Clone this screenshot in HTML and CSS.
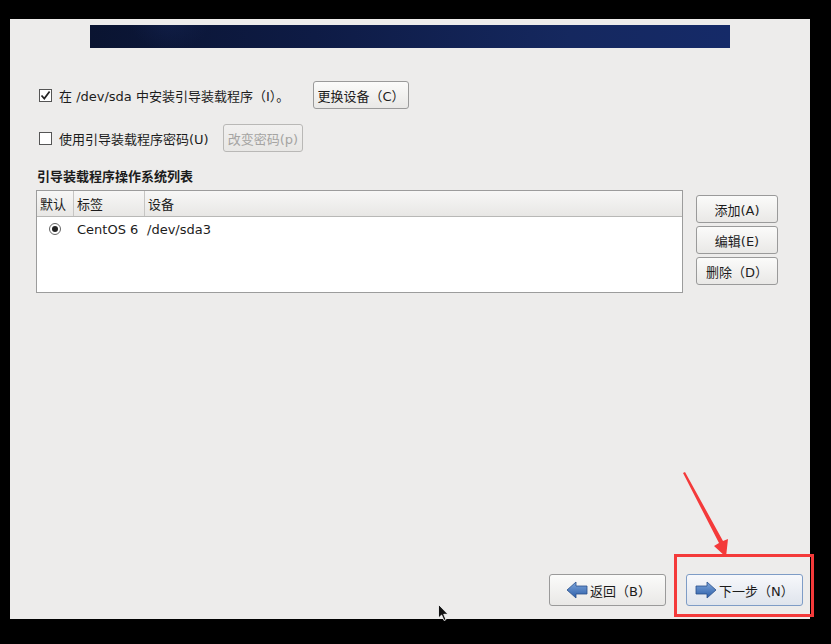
FILE: index.html
```html
<!DOCTYPE html>
<html>
<head>
<meta charset="utf-8">
<link rel="stylesheet" href="styles.css">
</head>
<body>
<div class="window">
  <div class="banner"></div>

  <div class="row row1">
    <span class="check checked">
      <svg width="11" height="11" viewBox="0 0 11 11"><path d="M1.5 5.5 L4.3 8.6 L9.6 1.6" fill="none" stroke="#222" stroke-width="1.7"/></svg>
    </span>
    <span class="label label1">在 /dev/sda 中安装引导装载程序（I）。</span>
    <button class="btn btn-change">更换设备（C）</button>
  </div>

  <div class="row row2">
    <span class="check"></span>
    <span class="label label2">使用引导装载程序密码(U)</span>
    <button class="btn btn-pass" disabled>改变密码(p)</button>
  </div>

  <div class="heading">引导装载程序操作系统列表</div>

  <div class="list-area">
    <div class="table">
      <div class="thead">
        <div class="th c1">默认</div>
        <div class="th c2">标签</div>
        <div class="th c3">设备</div>
      </div>
      <div class="trow">
        <div class="td c1"><span class="radio"><span class="dot"></span></span></div>
        <div class="td c2">CentOS 6</div>
        <div class="td c3">/dev/sda3</div>
      </div>
    </div>
    <div class="side">
      <button class="btn side-btn b-add">添加(A)</button>
      <button class="btn side-btn b-edit">编辑(E)</button>
      <button class="btn side-btn b-del">删除（D）</button>
    </div>
  </div>

  <div class="spacer"></div>

  <div class="footer">
    <button class="btn nav back">
      <svg width="22" height="18" viewBox="0 0 22 18">
        <defs><linearGradient id="ga" x1="0" y1="0" x2="0" y2="1"><stop offset="0" stop-color="#7ea6db"/><stop offset="1" stop-color="#2c5ea8"/></linearGradient></defs>
        <path d="M1 9 L10 1 L10 5 L21 5 L21 13 L10 13 L10 17 Z" fill="url(#ga)" stroke="#2a4f8a" stroke-width="0.8"/>
      </svg>
      <span>返回（B）</span>
    </button>
    <button class="btn nav next">
      <svg width="22" height="18" viewBox="0 0 22 18">
        <defs><linearGradient id="gb" x1="0" y1="0" x2="0" y2="1"><stop offset="0" stop-color="#7ea6db"/><stop offset="1" stop-color="#2c5ea8"/></linearGradient></defs>
        <path d="M21 9 L12 1 L12 5 L1 5 L1 13 L12 13 L12 17 Z" fill="url(#gb)" stroke="#2a4f8a" stroke-width="0.8"/>
      </svg>
      <span>下一步（N）</span>
    </button>
  </div>

  <div class="annot-box"></div>
  <svg class="annot-arrow" width="60" height="90" viewBox="0 0 60 90">
    <path d="M2 2 L38 72 L33 75 L45 86 L47 68 L42 70 L4 1 Z" fill="#f43a3a"/>
  </svg>
  <svg class="cursor" width="12" height="18" viewBox="0 0 12 18">
    <path d="M0.5 0.5 L0.5 14 L3.6 11 L6 16.5 L8 15.6 L5.7 10.3 L10 10.3 Z" fill="#111" stroke="#fff" stroke-width="0.8"/>
  </svg>
</div>
</body>
</html>
```

FILE: styles.css
```css
html, body {
  margin: 0;
  padding: 0;
  background: #000;
}
body {
  width: 831px;
  height: 644px;
  overflow: hidden;
  font-family: "DejaVu Sans", "Noto Sans CJK SC", sans-serif;
  font-size: 13px;
  color: #1c1c1c;
}
.window {
  position: relative;
  margin: 19px 0 0 10px;
  width: 800px;
  height: 600px;
  background: #edeceb;
  display: flex;
  flex-direction: column;
  box-sizing: border-box;
  padding-left: 26px;
}
.banner {
  margin-left: 54px;
  margin-top: 6px;
  width: 640px;
  height: 23px;
  background:
    radial-gradient(ellipse 40px 30px at 80px -4px, rgba(20,35,80,0.55), rgba(20,35,80,0) 100%),
    linear-gradient(90deg, #0a1431 0%, #0e1b45 35%, #15285f 75%, #152a68 100%);
}
.row {
  display: flex;
  align-items: center;
}
.row1 {
  margin-top: 33px;
  height: 28px;
}
.row2 {
  margin-top: 15px;
  height: 28px;
}
.check {
  width: 11px;
  height: 11px;
  border: 1px solid #555;
  background: #fff;
  margin-left: 3px;
  display: flex;
  align-items: center;
  justify-content: center;
}
.label {
  margin-left: 7px;
  white-space: nowrap;
}
.btn {
  font-family: "DejaVu Sans", "Noto Sans CJK SC", sans-serif;
  font-size: 13px;
  color: #1c1c1c;
  border: 1px solid #9a9a9a;
  border-radius: 3px;
  background: linear-gradient(#fbfbfa, #e9e8e6);
  padding: 0 4px;
  box-sizing: border-box;
  display: flex;
  align-items: center;
  justify-content: center;
  white-space: nowrap;
}
.btn-change {
  width: 96px;
  height: 28px;
}
.label1 { width: 254px; }
.label2 { width: 164px; }
.btn-pass {
  width: 80px;
  height: 28px;
  color: #a5a4a2;
  border-color: #b9b8b6;
  background: linear-gradient(#f1f0ef, #e8e7e5);
}
.heading {
  margin-top: 16px;
  font-weight: bold;
  height: 18px;
  line-height: 18px;
  margin-left: 1px;
}
.list-area {
  margin-top: 4px;
  display: flex;
  align-items: flex-start;
}
.table {
  width: 647px;
  height: 103px;
  box-sizing: border-box;
  border: 1px solid #9c9c9c;
  background: #fff;
}
.thead {
  display: flex;
  height: 26px;
  box-sizing: border-box;
  border-bottom: 1px solid #b8b8b6;
  background: linear-gradient(#f7f7f6, #e8e7e5);
}
.th {
  display: flex;
  align-items: center;
  padding-left: 3px;
  box-sizing: border-box;
}
.th.c1 { width: 36px; }
.th.c2, .th.c3 { border-left: 1px solid #c6c5c3; }
.th.c2 { width: 71px; }
.th.c3 { flex: 1; }
.trow {
  display: flex;
  height: 24px;
  align-items: center;
}
.td.c1 { width: 40px; display: flex; padding-left: 12px; box-sizing: border-box; }
.td.c2 { width: 70px; }
.td.c3 { flex: 1; }
.radio {
  width: 10px;
  height: 10px;
  border: 1px solid #666;
  border-radius: 50%;
  background: #fff;
  display: flex;
  align-items: center;
  justify-content: center;
}
.dot {
  width: 6px;
  height: 6px;
  border-radius: 50%;
  background: #222;
}
.side {
  margin-left: 13px;
  margin-top: 5px;
  display: flex;
  flex-direction: column;
  gap: 3px;
}
.side-btn {
  width: 82px;
  height: 28px;
}
.spacer { flex: 1; }
.footer {
  display: flex;
  margin-left: 513px;
  margin-bottom: 13px;
  gap: 20px;
}
.nav {
  width: 117px;
  height: 32px;
  gap: 2px;
  justify-content: flex-start;
  padding-left: 16px;
}
.next {
  border-color: #7e9cc6;
  background: linear-gradient(#f7f8fb, #dfe4ec);
  padding-left: 8px;
}
.back svg, .next svg { flex: 0 0 auto; }
.annot-box {
  position: absolute;
  left: 664px;
  top: 535px;
  width: 140px;
  height: 63px;
  box-sizing: border-box;
  border: 3px solid #f43a3a;
}
.annot-arrow {
  position: absolute;
  left: 671px;
  top: 452px;
}
.cursor {
  position: absolute;
  left: 428px;
  top: 585px;
}
```
